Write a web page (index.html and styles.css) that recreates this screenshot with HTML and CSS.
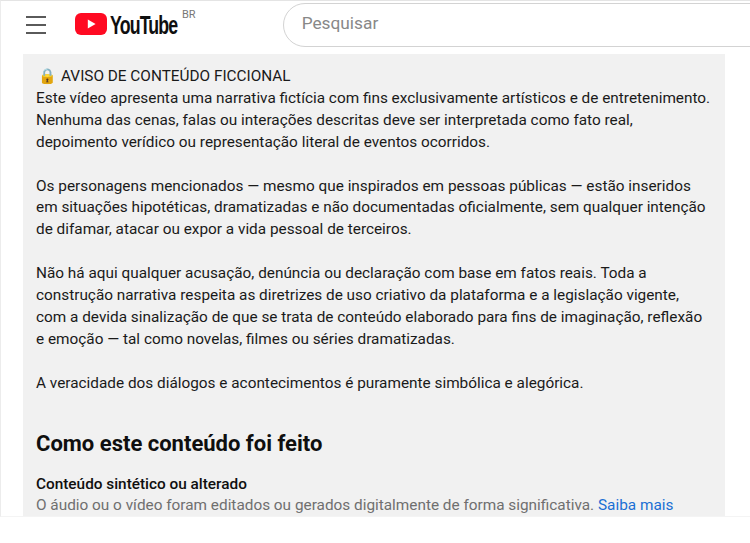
FILE: index.html
```html
<!DOCTYPE html>
<html lang="pt-BR">
<head>
    <meta charset="utf-8">
    <title>YouTube</title>
    <link rel="stylesheet" href="styles.css">
</head>
<body>
<div class="page">
    <header class="masthead">
        <button class="menu-btn" type="button" aria-label="Menu">
            <span></span><span></span><span></span>
        </button>
        <a class="logo" href="#">
            <svg class="logo-mark" width="32" height="22" viewBox="0 0 32 22">
                <rect width="32" height="22" rx="6" fill="#ff0a22"/>
                <path d="M12.8 6.5v9l7.8-4.5z" fill="#fff"/>
            </svg>
            <span class="logo-text">YouTube</span>
            <span class="logo-country">BR</span>
        </a>
        <div class="search">Pesquisar</div>
    </header>
    <main class="description">
        <p class="notice"><span class="lock">🔒</span>AVISO DE CONTEÚDO FICCIONAL<br>
        Este vídeo apresenta uma narrativa fictícia com fins exclusivamente artísticos e de entretenimento.<br>
        Nenhuma das cenas, falas ou interações descritas deve ser interpretada como fato real,<br>
        depoimento verídico ou representação literal de eventos ocorridos.</p>
        <p class="notice">Os personagens mencionados — mesmo que inspirados em pessoas públicas — estão inseridos<br>
        em situações hipotéticas, dramatizadas e não documentadas oficialmente, sem qualquer intenção<br>
        de difamar, atacar ou expor a vida pessoal de terceiros.</p>
        <p class="notice">Não há aqui qualquer acusação, denúncia ou declaração com base em fatos reais. Toda a<br>
        construção narrativa respeita as diretrizes de uso criativo da plataforma e a legislação vigente,<br>
        com a devida sinalização de que se trata de conteúdo elaborado para fins de imaginação, reflexão<br>
        e emoção — tal como novelas, filmes ou séries dramatizadas.</p>
        <p class="notice">A veracidade dos diálogos e acontecimentos é puramente simbólica e alegórica.</p>
        <h2 class="how-title">Como este conteúdo foi feito</h2>
        <h3 class="how-label">Conteúdo sintético ou alterado</h3>
        <p class="how-text">O áudio ou o vídeo foram editados ou gerados digitalmente de forma significativa. <a href="#">Saiba mais</a></p>
    </main>
</div>
</body>
</html>
```

FILE: styles.css
```css
html, body {
    margin: 0;
    padding: 0;
    background: #fff;
}
body {
    font-family: Roboto, "Noto Sans", sans-serif;
    font-size: 15.35px;
    color: #1a1a1a;
}
.page {
    height: 517px;
    overflow: hidden;
    box-sizing: border-box;
    border-top: 1px solid #e4e4e4;
    border-left: 1px solid #ececec;
    border-bottom: 1px solid #f4f4f4;
}
.masthead {
    display: flex;
    align-items: flex-start;
    height: 53px;
}
.menu-btn {
    flex: none;
    display: flex;
    flex-direction: column;
    gap: 6px;
    width: 20px;
    margin: 15px 0 0 25px;
    padding: 0;
    border: 0;
    background: none;
}
.menu-btn span {
    display: block;
    width: 20px;
    height: 2px;
    background: #5a5a5a;
}
.logo {
    flex: none;
    display: flex;
    align-items: flex-start;
    margin: 12px 0 0 29px;
    color: #0f0f0f;
    text-decoration: none;
}
.logo-mark {
    flex: none;
}
.logo-text {
    width: 68px;
    margin-left: 3px;
    font-family: "Liberation Sans", sans-serif;
    font-size: 25px;
    font-weight: 700;
    line-height: 25px;
    letter-spacing: -1.2px;
    white-space: nowrap;
    transform: scaleX(0.71);
    transform-origin: left top;
}
.logo-country {
    margin: -5px 0 0 4px;
    font-size: 11px;
    line-height: 14px;
    color: #777;
}
.search {
    flex: none;
    box-sizing: border-box;
    width: 520px;
    height: 44px;
    margin: 2px 0 0 87px;
    padding-left: 18px;
    border: 1px solid #d3d3d3;
    border-radius: 22px 0 0 22px;
    font-size: 17.3px;
    line-height: 38px;
    color: #888;
}
.description {
    box-sizing: border-box;
    width: 702px;
    height: 463px;
    margin-left: 22px;
    padding: 11px 13px 0;
    background: #f1f1f1;
    line-height: 21.9px;
    white-space: nowrap;
    overflow: hidden;
}
.notice {
    margin: 0 0 21.9px;
}
.lock {
    display: inline-block;
    width: 25px;
    padding-left: 2px;
    box-sizing: border-box;
    font-family: "Noto Sans", "DejaVu Sans", sans-serif;
    font-size: 15px;
}
.how-title {
    margin: 34px 0 0;
    font-size: 22px;
    font-weight: 700;
    line-height: 30px;
    color: #0f0f0f;
}
.how-label {
    margin: 14px 0 0;
    font-size: 15.35px;
    font-weight: 500;
    line-height: 22px;
    color: #0f0f0f;
}
.how-text {
    margin: 0;
    color: #6f6f6f;
}
.how-text a {
    color: #1a6fd4;
    text-decoration: none;
}
```
